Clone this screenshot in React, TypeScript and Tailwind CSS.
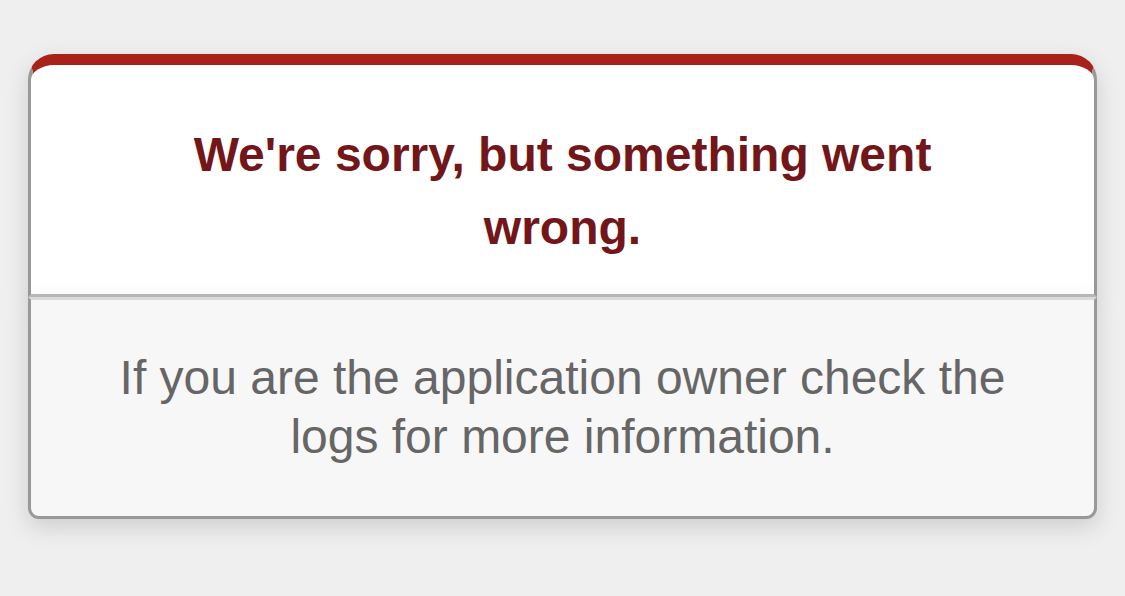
export default function App() {
  return (
    <div
      className="min-h-[596px] bg-[#EFEFEF] pt-[54px] text-center"
      style={{ fontFamily: '"Liberation Sans", Arial, sans-serif' }}
    >
      <div className="mx-auto w-[1069px]">
        <div className="rounded-t-[26px] border-[3px] border-t-[11px] border-[#CCC] border-t-[#A82219] border-l-[#999] border-r-[#999] border-b-[#BBB] bg-white px-[80px] pt-[53px] pb-[30px] shadow-[0_8px_22px_rgba(50,50,50,0.17)]">
          <h1 className="text-[48px] font-bold leading-[73px] text-[#731619]">
            We're sorry, but something went
            <br />
            wrong.
          </h1>
        </div>
        <p className="rounded-b-[11px] border-[3px] border-[#CCC] border-t-[#DADADA] border-l-[#999] border-r-[#999] border-b-[#999] bg-[#F7F7F7] px-[30px] pt-[48px] pb-[50px] text-[48px] leading-[59px] text-[#666] shadow-[0_8px_22px_rgba(50,50,50,0.17)]">
          If you are the application owner check the
          <br />
          logs for more information.
        </p>
      </div>
    </div>
  );
}
